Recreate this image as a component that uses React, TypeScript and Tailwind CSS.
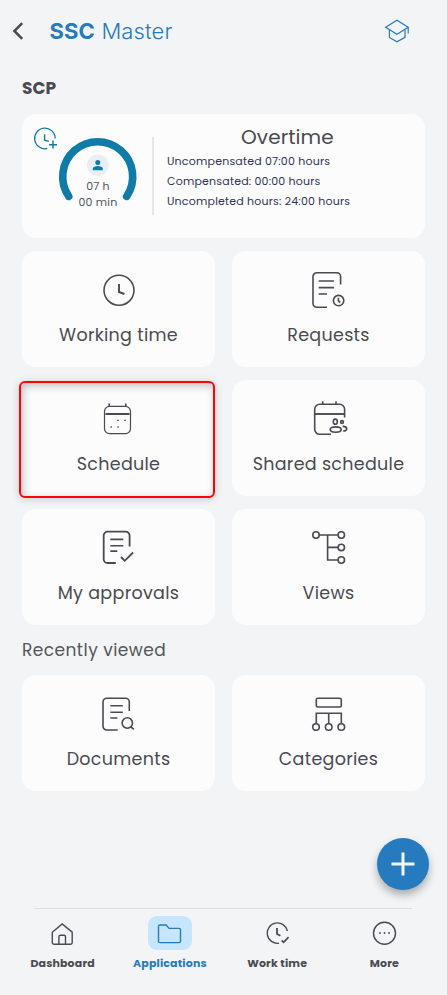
import type { ReactNode } from "react";

type Tile = {
  label: string;
  icon: ReactNode;
  highlighted?: boolean;
};

const applications: Tile[] = [
  {
    label: "Working time",
    icon: (
      <>
        <circle cx="21" cy="20.3" r="15" />
        <path d="M21 14v8l5.4 2" strokeWidth="1.9" />
      </>
    ),
  },
  {
    label: "Requests",
    icon: (
      <>
        <path d="M32.6 14.6V6.5a3.8 3.8 0 0 0-3.8-3.8H8.8A3.8 3.8 0 0 0 5 6.5v27a3.8 3.8 0 0 0 3.8 3.8H19" />
        <path d="M10.7 11H26M10.7 17.6H26M10.7 24H19" />
        <circle cx="30.6" cy="30.6" r="5.2" />
        <path d="M30.4 27.8v3l1.8 1.8" />
      </>
    ),
  },
  {
    label: "Schedule",
    highlighted: true,
    icon: (
      <>
        <rect x="6.5" y="7.4" width="26" height="27.2" rx="5" strokeWidth="1.2" />
        <path d="M7.5 15h24" strokeWidth="2" />
        <path d="M11.2 4.5V7.2M27.8 4.5V7.2" />
        <path
          d="M20 21.3h.01M27 21.3h.01M13.2 28h.01M20 28h.01"
          strokeWidth="1.7"
          strokeLinecap="round"
        />
      </>
    ),
  },
  {
    label: "Shared schedule",
    icon: (
      <>
        <path d="M36.6 18.6v-8.3a5 5 0 0 0-5-5H11.7a5 5 0 0 0-5 5v20a5 5 0 0 0 5 5H23" />
        <path d="M6.7 15h29.9" strokeWidth="1.9" />
        <path d="M14.7 2.2v3.2M28 2.2v3.2" />
        <ellipse cx="27.3" cy="22.7" rx="2" ry="2.6" />
        <circle cx="34" cy="23" r="1.4" />
        <ellipse cx="27.7" cy="30.6" rx="5.5" ry="2.7" />
        <path d="M34.6 27.4c5.2-.2 5.6 4.6.6 4.6" />
      </>
    ),
  },
  {
    label: "My approvals",
    icon: (
      <>
        <path
          d="M31.6 18.6V7.5a3.8 3.8 0 0 0-3.8-3.8H9.5a3.8 3.8 0 0 0-3.8 3.8v23.7A3.8 3.8 0 0 0 9.5 35h8.3"
          strokeWidth="1.8"
        />
        <path d="M12.3 11.4h13M12.3 17.7h13M12.3 23.1h7" />
        <path d="m23 29 3.7 3.8 8.4-8.3" strokeWidth="1.8" />
      </>
    ),
  },
  {
    label: "Views",
    icon: (
      <>
        <circle cx="8" cy="7" r="3.2" />
        <circle cx="33.3" cy="7" r="3.2" />
        <circle cx="33.3" cy="19.4" r="3.2" />
        <circle cx="33.3" cy="32" r="3.2" />
        <path d="M11.2 7h18.9M19.6 7v25h10.5M19.6 19.4h10.5" />
      </>
    ),
  },
];

const recentlyViewed: Tile[] = [
  {
    label: "Documents",
    icon: (
      <>
        <path d="M31.3 17V8.1a3.8 3.8 0 0 0-3.8-3.8H8.8A3.8 3.8 0 0 0 5 8.1v24.1A3.8 3.8 0 0 0 8.8 36h10.9" />
        <path d="M12.3 11.7h12.5M12.3 18.2h12.5M12.3 24h7" />
        <circle cx="29.3" cy="29" r="5.2" />
        <path d="m33 32.8 2.8 2.6" strokeWidth="1.8" />
      </>
    ),
  },
  {
    label: "Categories",
    icon: (
      <>
        <rect x="8.3" y="4.3" width="25" height="8.7" rx="1.5" />
        <path d="M8.3 29.8V19.2h25v10.6M20.7 19.2v10.6" />
        <circle cx="8" cy="33" r="3.3" />
        <circle cx="20.7" cy="33" r="3.3" />
        <circle cx="33.3" cy="33" r="3.3" />
      </>
    ),
  },
];

const navItems = [
  {
    label: "Dashboard",
    icon: (
      <path d="M2.3 11.2 12.2 3l10 8.2v10.2a1.8 1.8 0 0 1-1.8 1.8H4.1a1.8 1.8 0 0 1-1.8-1.8V11.2Zm6.6 12v-7.4c0-1 .6-1.5 1.5-1.5H14c.9 0 1.5.5 1.5 1.5v7.4" />
    ),
  },
  {
    label: "Applications",
    active: true,
    icon: (
      <path d="M1.5 20.2V5.4c0-.8.6-1.4 1.4-1.4h6.2l3 3.4h10c.8 0 1.4.6 1.4 1.4v11.4c0 .8-.6 1.4-1.4 1.4H2.9c-.8 0-1.4-.6-1.4-1.4Z" />
    ),
  },
  {
    label: "Work time",
    icon: (
      <>
        <path d="M22.4 10A10.2 10.2 0 1 0 14 22.2" />
        <path d="M12 7v6l3.4 1.8" strokeWidth="1.8" />
        <path d="m16.6 19.4 2 1.9 5-5.2" strokeWidth="1.7" />
      </>
    ),
  },
  {
    label: "More",
    icon: (
      <>
        <circle cx="12.5" cy="12.3" r="11" />
        <path
          d="M8 12h.01M12.5 12h.01M17 12h.01"
          strokeWidth="1.8"
          strokeLinecap="round"
        />
      </>
    ),
  },
];

function TileCard({ label, icon, highlighted }: Tile) {
  return (
    <button
      type="button"
      className={`relative flex h-[116px] flex-col items-center rounded-[14px] pt-[19px] text-[#4a4a52] ${
        highlighted ? "" : "bg-[#fcfcfc]"
      }`}
    >
      {highlighted && (
        <span className="absolute top-px right-0 -bottom-[2px] -left-[3px] rounded-md border-2 border-[#fb0407] bg-[#fcfcfc] shadow-[0_1px_8px_rgba(0,0,0,0.18),inset_2px_3px_8px_rgba(0,0,0,0.24)]" />
      )}
      <svg
        width="41"
        height="40"
        viewBox="0 0 41 40"
        fill="none"
        stroke="currentColor"
        strokeWidth="1.6"
        className="relative overflow-visible"
      >
        {icon}
      </svg>
      <span className="relative mt-[12px] text-[17.5px] leading-[26px] tracking-[0.3px] whitespace-nowrap">
        {label}
      </span>
    </button>
  );
}

function OvertimeCard() {
  return (
    <section className="flex h-[124px] rounded-[14px] bg-[#fcfcfc]">
      <div className="relative h-[124px] w-[130px]">
        <svg
          width="130"
          height="124"
          viewBox="0 0 130 124"
          fill="none"
          stroke="#0f7ca8"
        >
          <path
            d="M46.7 82.3a35 35 0 1 1 58 0"
            strokeWidth="7.6"
            strokeLinecap="round"
          />
          <path
            d="M33.2 24.4A10.3 10.3 0 1 0 25.2 34.5"
            strokeWidth="1.3"
          />
          <path d="M22.6 20.2v6l4.2 1.2" strokeWidth="1.4" />
          <path d="M31 26.6v8M27 30.7h8" strokeWidth="1.5" />
          <circle cx="75.8" cy="51.2" r="10.8" fill="#e9edf6" stroke="none" />
          <circle cx="75.8" cy="48.6" r="2.5" fill="#0f7ca8" stroke="none" />
          <path
            d="M70.8 56.2v-1.4c0-1.8 3.2-2.7 5-2.7s5 .9 5 2.7v1.4Z"
            fill="#0f7ca8"
            stroke="none"
          />
        </svg>
        <p className="absolute top-[64px] left-[46px] w-[60px] text-center text-[11px] leading-[16px] tracking-[0.2px] text-[#55555b]">
          07 h
          <br />
          00 min
        </p>
      </div>
      <div className="mt-[23px] h-[78px] w-[2px] bg-[#e6e6e8]" />
      <div className="ml-[13px] flex-1">
        <h2 className="mt-[9px] ml-[74px] text-[20px] leading-[28px] tracking-[0.1px] text-[#4a4a52]">
          Overtime
        </h2>
        <div className="mt-px text-[11px] leading-[19.9px] tracking-[0.2px] whitespace-nowrap text-[#2f3354]">
          <p>Uncompensated 07:00 hours</p>
          <p>Compensated: 00:00 hours</p>
          <p>Uncompleted hours: 24:00 hours</p>
        </div>
      </div>
    </section>
  );
}

function BottomNav() {
  return (
    <nav className="mx-[9px] mt-auto h-[87px]">
      <div className="mx-[26px] h-px bg-[#dcdee1]" />
      <ul className="grid grid-cols-4 pt-[7px]">
        {navItems.map((item) => (
          <li
            key={item.label}
            className={`flex flex-col items-center ${
              item.active ? "text-[#257bbd]" : "text-[#4a4a52]"
            }`}
          >
            <span
              className={`flex h-[34px] w-[44px] items-center justify-center rounded-[9px] ${
                item.active ? "bg-[#c6e5fe]" : ""
              }`}
            >
              <svg
                width="25"
                height="25"
                viewBox="0 0 25 25"
                fill="none"
                stroke="currentColor"
                strokeWidth="1.4"
              >
                {item.icon}
              </svg>
            </span>
            <span className="mt-[5px] text-[11px] leading-[17px] font-bold tracking-[0.15px] whitespace-nowrap">
              {item.label}
            </span>
          </li>
        ))}
      </ul>
    </nav>
  );
}

export default function App() {
  return (
    <div className="relative flex h-[995px] w-[447px] flex-col overflow-hidden bg-[#f2f4f6] font-['Poppins','Inter',sans-serif]">
      <header className="flex h-[60px] items-center text-[#257bbd]">
        <svg
          width="12"
          height="20"
          viewBox="0 0 12 20"
          fill="none"
          stroke="#4a4a52"
          strokeWidth="2.5"
          className="mt-px ml-[12px]"
        >
          <path d="M10.2 2.2 2.4 10l7.8 7.8" />
        </svg>
        <h1 className="mt-[2px] ml-[25.5px] font-['Inter',sans-serif] text-[22px] leading-[30px] font-light tracking-[0.15px] whitespace-nowrap">
          <span className="font-bold">SSC</span> Master
        </h1>
        <svg
          width="26"
          height="26"
          viewBox="0 0 26 26"
          fill="none"
          stroke="currentColor"
          strokeWidth="1.2"
          className="mt-px mr-[37px] ml-auto"
        >
          <path d="M1.6 9.2 13 2.2l11.2 7L13 16.2 1.6 9.2ZM5.4 11.8v7.6l7.6 4.4 8-4.4v-8M24.2 9.2v6.4" />
        </svg>
      </header>

      <main className="px-[22px]">
        <h2 className="mt-[16px] text-[17px] leading-[24px] font-bold text-[#4a4a52]">
          SCP
        </h2>
        <div className="mt-[14px]">
          <OvertimeCard />
        </div>
        <div className="mt-[13px] grid grid-cols-2 gap-x-[17px] gap-y-[13px]">
          {applications.map((tile) => (
            <TileCard key={tile.label} {...tile} />
          ))}
        </div>
        <h3 className="mt-[12px] text-[17px] leading-[26px] tracking-[0.45px] text-[#55555b]">
          Recently viewed
        </h3>
        <div className="mt-[12px] grid grid-cols-2 gap-x-[17px]">
          {recentlyViewed.map((tile) => (
            <TileCard key={tile.label} {...tile} />
          ))}
        </div>
      </main>

      <button
        type="button"
        aria-label="Add"
        className="absolute top-[838px] left-[377px] flex size-[52px] items-center justify-center rounded-full bg-[#257bbd] shadow-[0_5px_9px_rgba(0,0,0,0.3)]"
      >
        <svg
          width="24"
          height="24"
          viewBox="0 0 24 24"
          stroke="#f2f4f6"
          strokeWidth="3"
        >
          <path d="M12 .5v23M.5 12h23" />
        </svg>
      </button>

      <BottomNav />
    </div>
  );
}
